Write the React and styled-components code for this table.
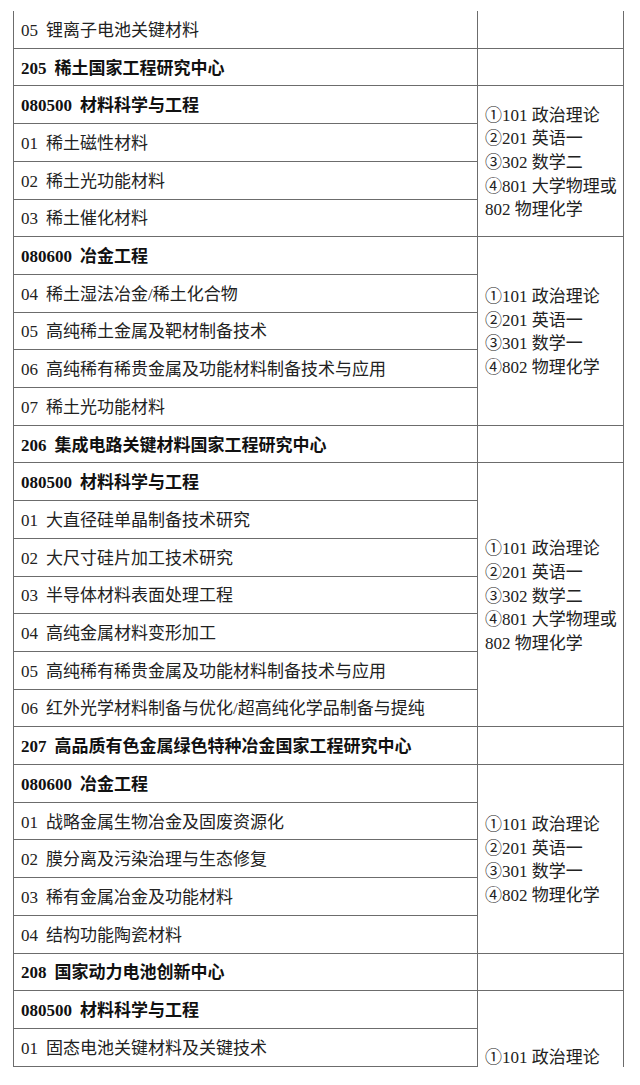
import React from 'react';
import styled, { createGlobalStyle } from 'styled-components';

const Global = createGlobalStyle`
  html, body { margin: 0; padding: 0; background: #fff; }
  body {
    font-family: "Liberation Serif", "Noto Sans CJK SC", serif;
    color: #1c1c1c;
  }
  * { box-sizing: border-box; }
`;

const Page = styled.div`
  padding: 11px 0 0 13px;
`;

const Table = styled.div`
  display: grid;
  grid-template-columns: 464px 146px;
  grid-auto-rows: 37.71px;
  border-left: 1px solid #6c6c6c;
  width: 611px;
`;

const LeftCell = styled.div`
  grid-column: 1;
  grid-row: ${(p) => p.$row};
  display: flex;
  align-items: center;
  padding: 3px 0 0 7px;
  border-right: 1px solid #6c6c6c;
  border-bottom: 1px solid #6c6c6c;
  font-size: 17px;
  font-weight: ${(p) => (p.$bold ? 700 : 400)};
  color: ${(p) => (p.$bold ? '#111' : '#222')};
  white-space: nowrap;
`;

const Label = styled.span`
  line-height: 1.3;
`;

const Code = styled.span`
  margin-right: 8px;
`;

const RightCell = styled.div`
  grid-column: 2;
  grid-row: ${(p) => p.$row} / span ${(p) => p.$span};
  display: flex;
  flex-direction: column;
  justify-content: ${(p) => (p.$open ? 'flex-end' : 'center')};
  padding: 3px 0 0 7px;
  margin-bottom: ${(p) => (p.$open ? '-3px' : '0')};
  border-right: 1px solid #6c6c6c;
  border-bottom: ${(p) => (p.$open ? 'none' : '1px solid #6c6c6c')};
  font-size: 17px;
  line-height: 23.7px;
  color: #222;
`;

const Line = styled.div`
  white-space: nowrap;
`;

const rows = [
  { code: '05', name: '锂离子电池关键材料' },
  { code: '205', name: '稀土国家工程研究中心', bold: true },
  { code: '080500', name: '材料科学与工程', bold: true },
  { code: '01', name: '稀土磁性材料' },
  { code: '02', name: '稀土光功能材料' },
  { code: '03', name: '稀土催化材料' },
  { code: '080600', name: '冶金工程', bold: true },
  { code: '04', name: '稀土湿法冶金/稀土化合物' },
  { code: '05', name: '高纯稀土金属及靶材制备技术' },
  { code: '06', name: '高纯稀有稀贵金属及功能材料制备技术与应用' },
  { code: '07', name: '稀土光功能材料' },
  { code: '206', name: '集成电路关键材料国家工程研究中心', bold: true },
  { code: '080500', name: '材料科学与工程', bold: true },
  { code: '01', name: '大直径硅单晶制备技术研究' },
  { code: '02', name: '大尺寸硅片加工技术研究' },
  { code: '03', name: '半导体材料表面处理工程' },
  { code: '04', name: '高纯金属材料变形加工' },
  { code: '05', name: '高纯稀有稀贵金属及功能材料制备技术与应用' },
  { code: '06', name: '红外光学材料制备与优化/超高纯化学品制备与提纯' },
  { code: '207', name: '高品质有色金属绿色特种冶金国家工程研究中心', bold: true },
  { code: '080600', name: '冶金工程', bold: true },
  { code: '01', name: '战略金属生物冶金及固废资源化' },
  { code: '02', name: '膜分离及污染治理与生态修复' },
  { code: '03', name: '稀有金属冶金及功能材料' },
  { code: '04', name: '结构功能陶瓷材料' },
  { code: '208', name: '国家动力电池创新中心', bold: true },
  { code: '080500', name: '材料科学与工程', bold: true },
  { code: '01', name: '固态电池关键材料及关键技术' },
];

const examA = ['①101 政治理论', '②201 英语一', '③302 数学二', '④801 大学物理或', '802 物理化学'];
const examB = ['①101 政治理论', '②201 英语一', '③301 数学一', '④802 物理化学'];

const exams = [
  { row: 1, span: 1, lines: [] },
  { row: 2, span: 1, lines: [] },
  { row: 3, span: 4, lines: examA },
  { row: 7, span: 5, lines: examB },
  { row: 12, span: 1, lines: [] },
  { row: 13, span: 7, lines: examA },
  { row: 20, span: 1, lines: [] },
  { row: 21, span: 5, lines: examB },
  { row: 26, span: 1, lines: [] },
  { row: 27, span: 2, lines: ['①101 政治理论'], open: true },
];

export default function App() {
  return (
    <>
      <Global />
      <Page>
        <Table>
          {rows.map((r, i) => (
            <LeftCell key={`l${i}`} $row={i + 1} $bold={r.bold}>
              <Label>
                <Code>{r.code}</Code>
                {r.name}
              </Label>
            </LeftCell>
          ))}
          {exams.map((e) => (
            <RightCell key={`r${e.row}`} $row={e.row} $span={e.span} $open={e.open}>
              {e.lines.map((l) => (
                <Line key={l}>{l}</Line>
              ))}
            </RightCell>
          ))}
        </Table>
      </Page>
    </>
  );
}
